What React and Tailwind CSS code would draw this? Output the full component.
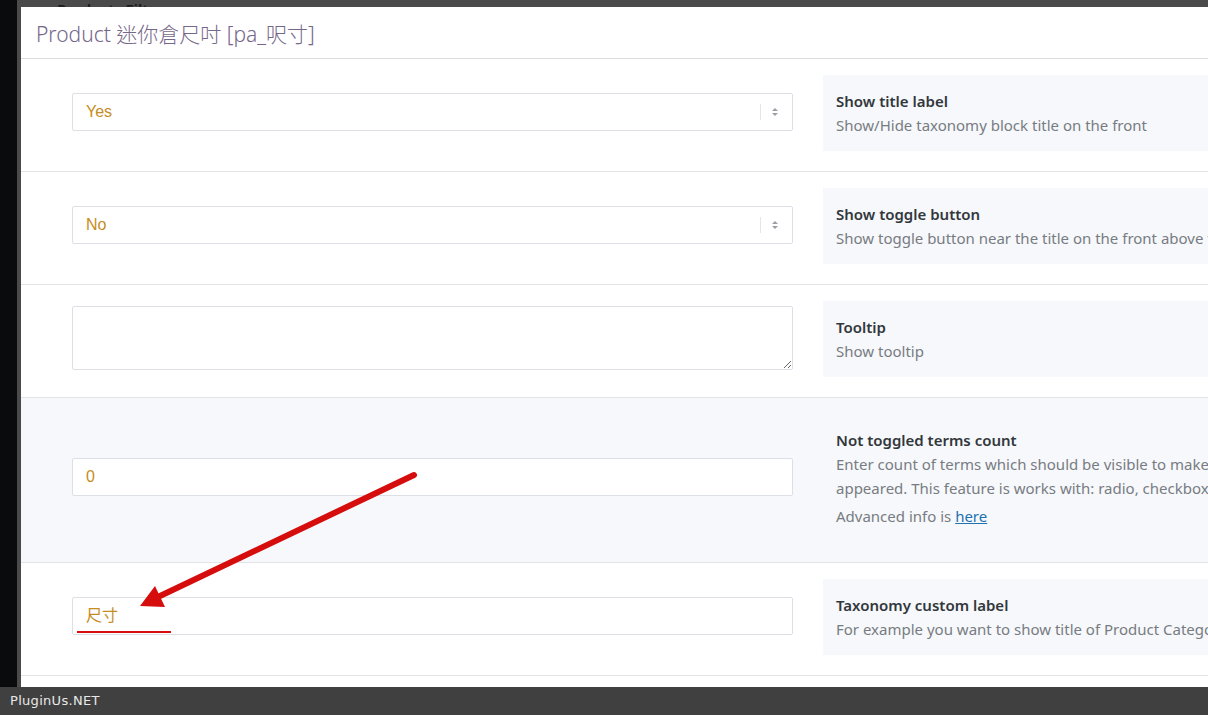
import React from 'react';

const font = { fontFamily: '"Noto Sans", "Open Sans", sans-serif' };

function SelectBox({ value }) {
  return (
    <div className="flex h-[38px] w-full items-center rounded-[2px] border border-[#dcdfe6] bg-white pl-[13px] pr-[10px]">
      <span className="flex-1 text-[16px] text-[#c58d24]" style={{ fontFamily: '"Liberation Sans", Arial, sans-serif' }}>
        {value}
      </span>
      <span className="mr-[10px] h-[16px] w-px bg-[#e3e5ea]" />
      <svg width="8" height="10" viewBox="0 0 8 10" className="mr-[3px]">
        <path d="M4 1 L7 4 H1 Z" fill="#9a9ea6" />
        <path d="M4 9 L7 6 H1 Z" fill="#9a9ea6" />
      </svg>
    </div>
  );
}

function TextInput({ value, children }) {
  return (
    <div className="relative flex h-[38px] w-full items-center rounded-[2px] border border-[#dcdfe6] bg-white pl-[13px]">
      <span className="text-[16px] text-[#c58d24]" style={{ fontFamily: '"Liberation Sans", "Noto Sans CJK TC", Arial, sans-serif' }}>
        {value}
      </span>
      {children}
    </div>
  );
}

function Desc({ title, lines, extra }) {
  return (
    <div className="flex-1 bg-[#f6f8fb] px-[13px] py-[14px] text-[15px] leading-[24px]" style={font}>
      <div className="whitespace-nowrap font-semibold text-[#32373c]">{title}</div>
      {lines.map((l, i) => (
        <div key={i} className="whitespace-nowrap text-[#787c82]">{l}</div>
      ))}
      {extra}
    </div>
  );
}

function Row({ left, right, bg = 'bg-white' }) {
  return (
    <div className={`flex items-center gap-[30px] border-b border-[#e2e4e7] pb-[20px] pl-[51px] pt-[16px] ${bg}`}>
      <div className="w-[721px] shrink-0 pb-[2px]">{left}</div>
      {right}
    </div>
  );
}

export default function App() {
  return (
    <div className="flex h-[715px] w-[1208px] flex-col overflow-hidden bg-[#4a4a4a]">
      <div className="flex min-h-0 flex-1">
        <div className="w-[17px] shrink-0 bg-[#0a0b0d]" />
        <div className="w-[4px] shrink-0 bg-[#4a4a4a]" />
        <div className="flex min-w-0 flex-1 flex-col">
          <div className="flex h-[7px] shrink-0 items-end overflow-hidden bg-[#4a4a4a] pl-[36px]">
            <span className="mb-[-12px] text-[15px] font-semibold leading-[20px] text-[#1c1c1c]" style={font}>
              Products Filter
            </span>
          </div>
          <div className="relative w-[1400px] flex-1 bg-white">
            <div className="flex h-[52px] items-center border-b border-[#dcdcde] pl-[15px] pt-[4px]">
              <span
                className="text-[21px] font-light text-[#75678a]"
                style={{ fontFamily: '"Noto Sans", "Noto Sans CJK TC", sans-serif' }}
              >
                Product 迷你倉尺吋 [pa_呎寸]
              </span>
            </div>

            <Row
              left={<SelectBox value="Yes" />}
              right={<Desc title="Show title label" lines={['Show/Hide taxonomy block title on the front']} />}
            />
            <Row
              left={<SelectBox value="No" />}
              right={
                <Desc
                  title="Show toggle button"
                  lines={['Show toggle button near the title on the front above the block of html-items']}
                />
              }
            />
            <Row
              left={
                <textarea
                  readOnly
                  className="block h-[64px] w-full rounded-[2px] border border-[#dcdfe6] bg-white outline-none"
                />
              }
              right={<Desc title="Tooltip" lines={['Show tooltip']} />}
            />
            <Row
              bg="bg-[#f7f8fb]"
              left={<TextInput value="0" />}
              right={
                <Desc
                  title="Not toggled terms count"
                  lines={[
                    'Enter count of terms which should be visible to make all other collapsible. "Show more" button will be',
                    'appeared. This feature is works with: radio, checkboxes, labels, colors/images.',
                  ]}
                  extra={
                    <div className="mt-[4px] whitespace-nowrap text-[#787c82]">
                      Advanced info is <span className="text-[#2271b1] underline">here</span>
                    </div>
                  }
                />
              }
            />
            <Row
              left={
                <TextInput value="尺寸">
                  <span className="absolute bottom-[1px] left-[4px] h-[2px] w-[94px] bg-[#d60d0d]" />
                </TextInput>
              }
              right={
                <Desc
                  title="Taxonomy custom label"
                  lines={['For example you want to show title of Product Categories as "My Products". Just for your convenience.']}
                />
              }
            />

            <svg className="pointer-events-none absolute left-0 top-0" width="500" height="700">
              <line x1="393" y1="468" x2="139" y2="589" stroke="#d60d0d" strokeWidth="6" strokeLinecap="round" />
              <path d="M119 599 L134 579 L144 600 Z" fill="#d60d0d" />
            </svg>
          </div>
        </div>
      </div>
      <div className="flex h-[28px] shrink-0 items-center bg-[#404040] pl-[10px]">
        <span className="text-[13px] tracking-[0.3px] text-[#e8e8e8]" style={{ fontFamily: '"DejaVu Sans", sans-serif' }}>
          PluginUs.NET
        </span>
      </div>
    </div>
  );
}
